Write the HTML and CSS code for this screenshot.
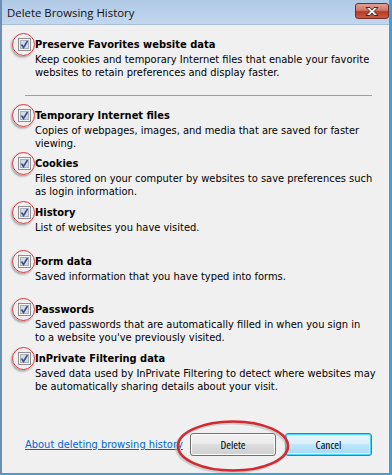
FILE: index.html
```html
<!DOCTYPE html>
<html>
<head>
<meta charset="utf-8">
<link rel="stylesheet" href="styles.css">
</head>
<body>
<div class="window">
  <div class="titlebar">
    <span class="title">Delete Browsing History</span>
    <div class="close">
      <svg width="18" height="11" viewBox="0 0 18 11">
        <path d="M3 1.5 H7 L9 4 L11 1.5 H15 L11 5.5 L15 9.5 H11 L9 7 L7 9.5 H3 L7 5.5 Z" fill="#f4f4f4" stroke="#4a2a2a" stroke-width="1" stroke-linejoin="round"/>
      </svg>
    </div>
  </div>
  <div class="client">
    <div class="item">
      <div class="cbwrap"><span class="mark"></span><svg class="cb" width="13" height="13" viewBox="0 0 13 13"><rect x="0.5" y="0.5" width="12" height="12" fill="#f4f4f4" stroke="#8f8f8f"/><rect x="2.5" y="2.5" width="8" height="8" fill="#d6dbe2" stroke="#a9b0ba"/><path d="M3.5 6.5 L5.5 9.5 L9.5 3" fill="none" stroke="#3c4f95" stroke-width="1.6"/></svg></div>
      <div class="text"><div class="head">Preserve Favorites website data</div><div class="desc">Keep cookies and temporary Internet files that enable your favorite websites to retain preferences and display faster.</div></div>
    </div>
    <div class="sep"></div>
    <div class="item">
      <div class="cbwrap"><span class="mark"></span><svg class="cb" width="13" height="13" viewBox="0 0 13 13"><rect x="0.5" y="0.5" width="12" height="12" fill="#f4f4f4" stroke="#8f8f8f"/><rect x="2.5" y="2.5" width="8" height="8" fill="#d6dbe2" stroke="#a9b0ba"/><path d="M3.5 6.5 L5.5 9.5 L9.5 3" fill="none" stroke="#3c4f95" stroke-width="1.6"/></svg></div>
      <div class="text"><div class="head">Temporary Internet files</div><div class="desc">Copies of webpages, images, and media that are saved for faster viewing.</div></div>
    </div>
    <div class="item">
      <div class="cbwrap"><span class="mark"></span><svg class="cb" width="13" height="13" viewBox="0 0 13 13"><rect x="0.5" y="0.5" width="12" height="12" fill="#f4f4f4" stroke="#8f8f8f"/><rect x="2.5" y="2.5" width="8" height="8" fill="#d6dbe2" stroke="#a9b0ba"/><path d="M3.5 6.5 L5.5 9.5 L9.5 3" fill="none" stroke="#3c4f95" stroke-width="1.6"/></svg></div>
      <div class="text"><div class="head">Cookies</div><div class="desc">Files stored on your computer by websites to save preferences such as login information.</div></div>
    </div>
    <div class="item">
      <div class="cbwrap"><span class="mark"></span><svg class="cb" width="13" height="13" viewBox="0 0 13 13"><rect x="0.5" y="0.5" width="12" height="12" fill="#f4f4f4" stroke="#8f8f8f"/><rect x="2.5" y="2.5" width="8" height="8" fill="#d6dbe2" stroke="#a9b0ba"/><path d="M3.5 6.5 L5.5 9.5 L9.5 3" fill="none" stroke="#3c4f95" stroke-width="1.6"/></svg></div>
      <div class="text"><div class="head">History</div><div class="desc">List of websites you have visited.</div></div>
    </div>
    <div class="item">
      <div class="cbwrap"><span class="mark"></span><svg class="cb" width="13" height="13" viewBox="0 0 13 13"><rect x="0.5" y="0.5" width="12" height="12" fill="#f4f4f4" stroke="#8f8f8f"/><rect x="2.5" y="2.5" width="8" height="8" fill="#d6dbe2" stroke="#a9b0ba"/><path d="M3.5 6.5 L5.5 9.5 L9.5 3" fill="none" stroke="#3c4f95" stroke-width="1.6"/></svg></div>
      <div class="text"><div class="head">Form data</div><div class="desc">Saved information that you have typed into forms.</div></div>
    </div>
    <div class="item">
      <div class="cbwrap"><span class="mark"></span><svg class="cb" width="13" height="13" viewBox="0 0 13 13"><rect x="0.5" y="0.5" width="12" height="12" fill="#f4f4f4" stroke="#8f8f8f"/><rect x="2.5" y="2.5" width="8" height="8" fill="#d6dbe2" stroke="#a9b0ba"/><path d="M3.5 6.5 L5.5 9.5 L9.5 3" fill="none" stroke="#3c4f95" stroke-width="1.6"/></svg></div>
      <div class="text"><div class="head">Passwords</div><div class="desc">Saved passwords that are automatically filled in when you sign in<br>to a website you've previously visited.</div></div>
    </div>
    <div class="item">
      <div class="cbwrap"><span class="mark"></span><svg class="cb" width="13" height="13" viewBox="0 0 13 13"><rect x="0.5" y="0.5" width="12" height="12" fill="#f4f4f4" stroke="#8f8f8f"/><rect x="2.5" y="2.5" width="8" height="8" fill="#d6dbe2" stroke="#a9b0ba"/><path d="M3.5 6.5 L5.5 9.5 L9.5 3" fill="none" stroke="#3c4f95" stroke-width="1.6"/></svg></div>
      <div class="text"><div class="head">InPrivate Filtering data</div><div class="desc">Saved data used by InPrivate Filtering to detect where websites may be automatically sharing details about your visit.</div></div>
    </div>
    <div class="footer">
      <a class="link" href="#">About deleting browsing history</a>
      <div class="btnwrap">
        <div class="btn">Delete</div>
        <svg class="ring" width="120" height="58" viewBox="0 0 120 58"><ellipse cx="58" cy="29" rx="55" ry="24.5" fill="none" stroke="#b8b8b8" stroke-width="3" transform="translate(-1.5 1.5)" opacity="0.6"/><ellipse cx="58" cy="29" rx="55" ry="24.5" fill="none" stroke="#d22a30" stroke-width="2.6"/></svg>
      </div>
      <div class="btn default">Cancel</div>
    </div>
  </div>
</div>
</body>
</html>
```
FILE: styles.css
```css
html, body {
  margin: 0;
  padding: 0;
  background: #f0f0f0;
}
.window {
  width: 392px;
  height: 475px;
  box-sizing: border-box;
  display: flex;
  flex-direction: column;
  border-left: 2px solid #6e8fb4;
  border-right: 3px solid #3aa2dc;
  border-bottom: 2px solid #3aa2dc;
  background: #f0f0f0;
  overflow: hidden;
}
.titlebar {
  height: 25px;
  flex: none;
  display: flex;
  align-items: center;
  justify-content: space-between;
  padding-left: 5px;
  padding-right: 0;
  background: linear-gradient(#afc9e5, #c3d7ee);
  border-bottom: 1px solid #a9c0d9;
  box-sizing: border-box;
}
.title {
  font-family: "Open Sans", sans-serif;
  font-size: 11.4px;
  color: #111;
  margin-top: 1px;
}
.close {
  width: 34px;
  height: 16px;
  margin-top: -2px;
  box-sizing: border-box;
  border: 1px solid #6e2c2c;
  border-radius: 3px;
  background: linear-gradient(#e0a195 0%, #cf7667 45%, #b8391f 55%, #cb5c45 100%);
  display: flex;
  align-items: center;
  justify-content: center;
}
.client {
  flex: 1;
  display: flex;
  flex-direction: column;
  padding: 11px 10px 0 16px;
  font-family: "DejaVu Sans Condensed", "DejaVu Sans", sans-serif;
  font-stretch: condensed;
  font-size: 11px;
  color: #000;
}
.item {
  display: flex;
  align-items: flex-start;
  margin-bottom: 5.7px;
}
.cbwrap {
  position: relative;
  width: 13px;
  height: 13px;
  margin-top: 2px;
  margin-right: 4px;
  flex: none;
}
.cb {
  display: block;
}
.mark {
  position: absolute;
  left: -6px;
  top: -5px;
  width: 21px;
  height: 21px;
  border: 1.3px solid #d7363c;
  border-radius: 50%;
  box-shadow: -1px 1.5px 2px rgba(0,0,0,0.3);
}
.text {
  flex: 1;
}
.head {
  font-weight: bold;
  line-height: 17px;
}
.desc {
  line-height: 13px;
  height: 26px;
}
.sep {
  height: 1px;
  background: #a0a0a0;
  margin: 10px 7px 11px 7px;
}
.footer {
  display: flex;
  align-items: center;
  margin-top: 34px;
  margin-right: 7px;
  padding-left: 7px;
}
.link {
  font-size: 11px;
  color: #0066cc;
  text-decoration: underline;
  flex: 1;
}
.btnwrap {
  position: relative;
  margin-right: 9px;
}
.btn {
  width: 86px;
  height: 23px;
  box-sizing: border-box;
  border: 1px solid #707070;
  border-radius: 3px;
  background: linear-gradient(#f2f2f2 0%, #ebebeb 45%, #dddddd 50%, #cfcfcf 100%);
  box-shadow: inset 0 0 0 1px #fcfcfc;
  font-family: "Open Sans", sans-serif;
  font-size: 11.4px;
  line-height: 21px;
  text-align: center;
  color: #000;
}
.btn.default {
  width: 87px;
  border-color: #3c7fb1;
  box-shadow: inset 0 0 0 1px #48d8fb, inset 0 0 0 2px #ddf0fa;
  background: linear-gradient(#eaf6fd 0%, #d9f0fc 45%, #bee6fd 50%, #a7d9f5 100%);
}
.ring {
  position: absolute;
  left: -15px;
  top: -16px;
}
```
